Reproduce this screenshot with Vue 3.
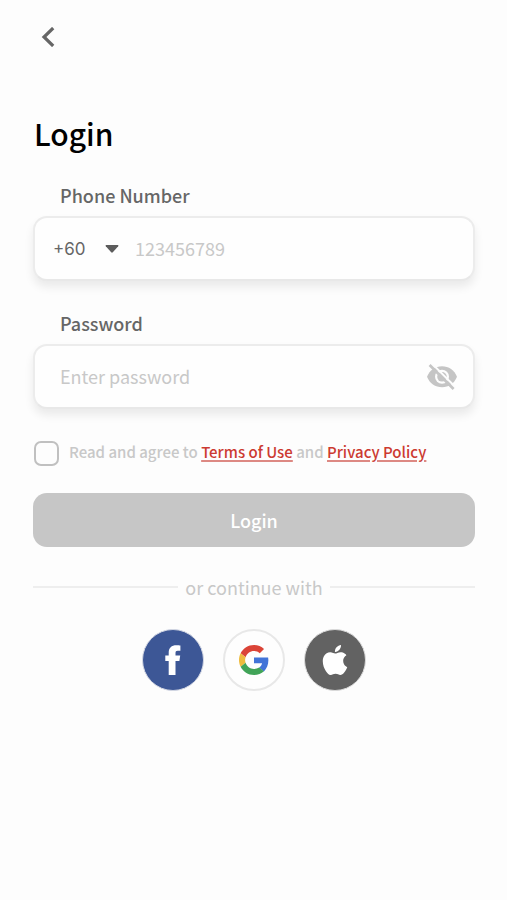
<script setup>
import { ref } from 'vue'

const code = ref('+60')
const phone = ref('')
const password = ref('')
const visible = ref(false)
const agreed = ref(false)
</script>

<template>
  <main class="page">
    <header class="topbar">
      <button class="back" type="button" aria-label="Back">
        <svg viewBox="0 0 14 20" width="14" height="20"><path d="M12.200 1 3 10l9.200 9" fill="none" stroke="#666" stroke-width="3.2" /></svg>
      </button>
    </header>

    <h1>Login</h1>

    <form @submit.prevent>
      <div class="field">
        <label for="phone">Phone Number</label>
        <div class="box phone-box">
          <div class="code">
            <select v-model="code" aria-label="Country code">
              <option>+60</option>
              <option>+65</option>
            </select>
            <svg class="caret" viewBox="0 0 14 8" width="14" height="8"><path d="M1.2 0h11.600q1.200.2.400 1.200L7.800 7.300q-.8.7-1.600 0L.8 1.200Q0 .2 1.200 0z" fill="#5c5c5c" /></svg>
          </div>
          <input id="phone" v-model="phone" type="tel" placeholder="123456789" />
        </div>
      </div>

      <div class="field">
        <label for="password">Password</label>
        <div class="box password-box">
          <input id="password" v-model="password" :type="visible ? 'text' : 'password'" placeholder="Enter password" />
          <button class="eye" type="button" aria-label="Show password" @click="visible = !visible">
            <svg viewBox="0 0 30 26" width="30" height="26">
              <path d="M0 12.800C2.600 6.300 8.300 2.300 15 2.300s12.400 4 15 10.500C27.400 19.300 21.700 23.300 15 23.300S2.600 19.300 0 12.800z" fill="#c5c5c5" />
              <circle cx="15" cy="12.800" r="7" fill="#fdfdfd" />
              <circle cx="15" cy="12.800" r="4.800" fill="#c5c5c5" />
              <path d="M4.600-.7 28.600 23.300" stroke="#fdfdfd" stroke-width="2" />
              <path d="M2.600 1 26.600 25" stroke="#c5c5c5" stroke-width="2.800" />
            </svg>
          </button>
        </div>
      </div>

      <div class="agree">
        <input id="agree" v-model="agreed" type="checkbox" />
        <p><label for="agree">Read and agree to</label> <a href="#terms">Terms of Use</a> and <a href="#privacy">Privacy Policy</a></p>
      </div>

      <button class="submit" type="submit">Login</button>
    </form>

    <div class="divider"><span>or continue with</span></div>

    <div class="social">
      <button class="facebook" type="button" aria-label="Facebook">
        <svg viewBox="0 0 16 30" width="16" height="30"><path d="M3.700 30V16H.3v-5.500h3.400V7.800C3.700 2.700 6.500.2 11.400.2c1.800 0 3.200.1 4 .3v5.200h-2.600c-1.900 0-2.300.8-2.300 2.500v2.300h4.700L14.400 16h-3.900v14z" fill="#fff" /></svg>
      </button>
      <button class="google" type="button" aria-label="Google">
        <svg viewBox="0 0 48 48" width="30" height="30">
          <path fill="#db4437" d="M24 9.500c3.540 0 6.710 1.220 9.210 3.600l6.850-6.850C35.900 2.380 30.470 0 24 0 14.620 0 6.510 5.380 2.560 13.220l7.980 6.190C12.430 13.720 17.740 9.500 24 9.500z" />
          <path fill="#4274d8" d="M46.980 24.550c0-1.570-.15-3.090-.38-4.550H24v9.020h12.940c-.58 2.960-2.260 5.480-4.780 7.180l7.730 6c4.510-4.180 7.090-10.360 7.090-17.650z" />
          <path fill="#eebb3d" d="M10.530 28.590c-.48-1.450-.76-2.990-.76-4.590s.27-3.140.76-4.590l-7.980-6.190C.92 16.460 0 20.120 0 24c0 3.880.92 7.540 2.560 10.780l7.970-6.190z" />
          <path fill="#41a458" d="M24 48c6.480 0 11.930-2.130 15.890-5.810l-7.730-6c-2.150 1.450-4.920 2.300-8.160 2.300-6.260 0-11.570-4.220-13.470-9.910l-7.980 6.190C6.510 42.620 14.620 48 24 48z" />
        </svg>
      </button>
      <button class="apple" type="button" aria-label="Apple">
        <svg viewBox="0 0 24 24" width="30" height="30"><path fill="#fff" d="M12.152 6.896c-.948 0-2.415-1.078-3.960-1.040-2.040.027-3.910 1.183-4.961 3.014-2.117 3.675-.546 9.103 1.519 12.090 1.013 1.454 2.208 3.090 3.792 3.039 1.520-.065 2.090-.987 3.935-.987 1.831 0 2.350.987 3.960.948 1.637-.026 2.676-1.480 3.676-2.948 1.156-1.688 1.636-3.325 1.662-3.415-.039-.013-3.182-1.221-3.220-4.857-.026-3.040 2.480-4.494 2.597-4.559-1.429-2.090-3.623-2.324-4.390-2.376-2-.156-3.675 1.090-4.610 1.090zM15.530 3.830c.843-1.012 1.400-2.427 1.245-3.830-1.207.052-2.662.805-3.532 1.818-.780.896-1.454 2.338-1.273 3.714 1.338.104 2.715-.688 3.559-1.701" /></svg>
      </button>
    </div>
  </main>
</template>

<style>
body {
  margin: 0;
  background: #fdfdfd;
}
</style>

<style scoped>
.page {
  min-height: 100vh;
  box-sizing: border-box;
  padding: 23px 32px 24px 33px;
  font-family: "Noto Sans CJK SC", "Noto Sans", sans-serif;
  font-size: 18px;
  line-height: 24px;
  color: #666;
}

button,
input,
select {
  font: inherit;
  color: inherit;
  margin: 0;
  padding: 0;
  border: 0;
  background: none;
}

button {
  cursor: pointer;
}

svg {
  display: block;
}

.topbar {
  display: flex;
}

.back {
  padding: 4px 8px;
}

h1 {
  margin: 58px 0 0;
  padding-left: 1px;
  font-size: 30px;
  line-height: 48px;
  font-weight: 500;
  color: #000;
}

.field {
  margin-top: 26px;
}

.field > label {
  display: block;
  padding-left: 27px;
  font-weight: 500;
}

.box {
  display: flex;
  align-items: center;
  box-sizing: border-box;
  height: 65px;
  margin-top: 9px;
  border: 2px solid #ececec;
  border-bottom-color: #e8e8e8;
  border-radius: 14px;
  background: #fefefe;
  box-shadow: 0 6px 10px rgba(0, 0, 0, 0.08);
}

.field + .field {
  margin-top: 30px;
}

.box input {
  flex: 1;
  min-width: 0;
  height: 100%;
  box-sizing: border-box;
  padding-bottom: 2px;
  outline: none;
}

.box input::placeholder {
  color: #c8c8c8;
  opacity: 1;
}

.phone-box {
  padding: 0 18px;
  gap: 16px;
}

.code {
  display: grid;
  grid-template-columns: 52px 14px;
  align-items: center;
}

.code select {
  grid-area: 1 / 1 / 2 / 3;
  appearance: none;
  font-family: Inter, sans-serif;
  font-size: 17px;
  cursor: pointer;
}

.caret {
  grid-area: 1 / 2;
  pointer-events: none;
}

.password-box {
  padding: 0 16px 0 25px;
}

.agree {
  display: flex;
  align-items: center;
  gap: 10px;
  margin-top: 31px;
  font-size: 15px;
  font-weight: 500;
  color: #c8c8c8;
}

.agree input {
  appearance: none;
  flex: none;
  box-sizing: border-box;
  width: 25px;
  height: 25px;
  margin-left: 1px;
  border: 2px solid #c0c0c0;
  border-radius: 7px;
}

.agree input:checked {
  background: #c5352c;
}

.agree p {
  margin: 0;
  padding-bottom: 2px;
}

.agree a {
  color: #cc3a31;
  text-decoration-color: #dd8983;
  text-decoration-thickness: 2px;
  text-underline-offset: 2px;
}

.submit {
  display: block;
  width: 100%;
  height: 54px;
  margin-top: 27px;
  border-radius: 14px;
  background: #c6c6c6;
  color: #fff;
  font-weight: 500;
}

.divider {
  display: flex;
  align-items: center;
  gap: 7px;
  margin-top: 28px;
  color: #c8c8c8;
}

.divider::before,
.divider::after {
  content: "";
  flex: 1;
  height: 2px;
  background: #eee;
}

.social {
  display: flex;
  justify-content: center;
  gap: 19px;
  margin-top: 30px;
}

.social button {
  display: flex;
  align-items: center;
  justify-content: center;
  box-sizing: border-box;
  width: 62px;
  height: 62px;
  border: 2px solid #e8e8e8;
  border-radius: 50%;
}

.social .facebook {
  background: #3d5796;
  border: 1px solid #d4d8e4;
}

.social .google {
  background: #fefefe;
}

.social .apple {
  background: #626262;
  border: 1px solid #dcdcdc;
}
</style>
